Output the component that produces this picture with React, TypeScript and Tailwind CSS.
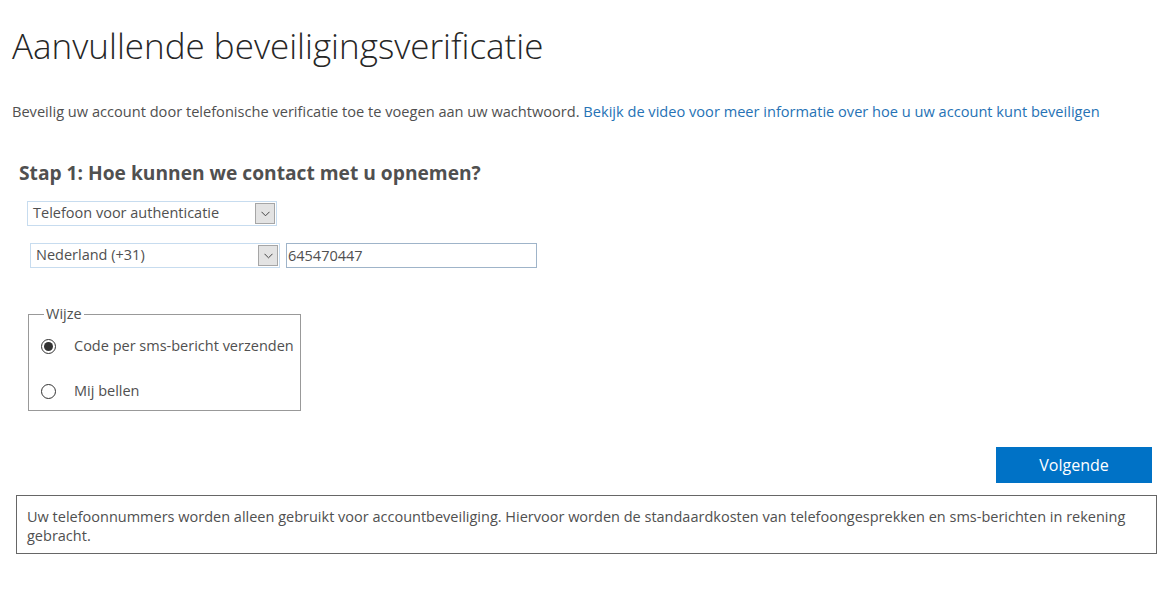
import React from "react";

function Chevron() {
  return (
    <svg width="9" height="6" viewBox="0 0 9 6" fill="none">
      <path d="M0.5 0.8 L4.5 4.8 L8.5 0.8" stroke="#444" strokeWidth="1" />
    </svg>
  );
}

function Select({ label, width }: { label: string; width: string }) {
  return (
    <div className={`flex h-[25px] items-center border border-[#c7dcef] bg-white ${width}`}>
      <span className="flex-1 pl-[5px] text-[14.5px] leading-none text-[#505050]">{label}</span>
      <span className="mr-[1px] flex h-[21px] w-[20px] items-center justify-center border border-[#a6a6a6] bg-[#e3e3e3]">
        <Chevron />
      </span>
    </div>
  );
}

function Radio({ checked }: { checked: boolean }) {
  return (
    <span className="flex h-[15px] w-[15px] shrink-0 items-center justify-center rounded-full border border-[#333] bg-white">
      {checked && <span className="h-[9px] w-[9px] rounded-full bg-[#333]" />}
    </span>
  );
}

export default function App() {
  return (
    <div
      className="min-h-[589px] w-full bg-white text-[#505050]"
      style={{ fontFamily: '"Segoe UI", "Open Sans", "Liberation Sans", sans-serif' }}
    >
      <div className="px-[12px] pt-[24px]">
        <h1 className="text-[35px] font-light leading-[44px] text-[#262626]">
          Aanvullende beveiligingsverificatie
        </h1>
        <p className="mt-[33px] text-[14.6px] leading-[20px] text-[#505050]">
          Beveilig uw account door telefonische verificatie toe te voegen aan uw wachtwoord.{" "}
          <span className="text-[#2672b5]">
            Bekijk de video voor meer informatie over hoe u uw account kunt beveiligen
          </span>
        </p>
      </div>

      <div className="pl-[19px] pt-[39px]">
        <h2 className="text-[19.2px] font-bold leading-[26px] text-[#505050]">
          Stap 1: Hoe kunnen we contact met u opnemen?
        </h2>
      </div>

      <div className="pl-[27px] pt-[15px]">
        <Select label="Telefoon voor authenticatie" width="w-[250px]" />
      </div>

      <div className="flex items-center gap-[6px] pl-[30px] pt-[17px]">
        <Select label="Nederland (+31)" width="w-[250px]" />
        <div className="flex h-[25px] w-[251px] items-center border border-[#9fb4c9] bg-white pl-[1px] text-[14.5px] text-[#505050]">
          645470447
        </div>
      </div>

      <div className="pl-[28px] pt-[38px]">
        <fieldset className="m-0 w-[273px] whitespace-nowrap border border-[#999] pb-[9px] pl-[12px] pr-[2px] pt-0">
          <legend className="ml-[3px] px-[2px] text-[14.5px] leading-[16px] text-[#505050]">Wijze</legend>
          <div className="flex items-center gap-[18px] pt-[14px]">
            <Radio checked />
            <span className="text-[14.5px] leading-[20px]">Code per sms-bericht verzenden</span>
          </div>
          <div className="flex items-center gap-[18px] pt-[25px]">
            <Radio checked={false} />
            <span className="text-[14.5px] leading-[20px]">Mij bellen</span>
          </div>
        </fieldset>
      </div>

      <div className="flex justify-end pr-[13px] pt-[36px]">
        <button className="h-[36px] w-[156px] bg-[#0072c6] text-[16px] text-white">Volgende</button>
      </div>

      <div className="px-[8px] pt-[12px]">
        <div className="ml-[8px] w-[1141px] border border-[#666] px-[10px] pb-[8px] pt-[11px] text-[14.5px] leading-[19px] text-[#505050]">
          Uw telefoonnummers worden alleen gebruikt voor accountbeveiliging. Hiervoor worden de standaardkosten van
          telefoongesprekken en sms-berichten in rekening gebracht.
        </div>
      </div>
    </div>
  );
}
